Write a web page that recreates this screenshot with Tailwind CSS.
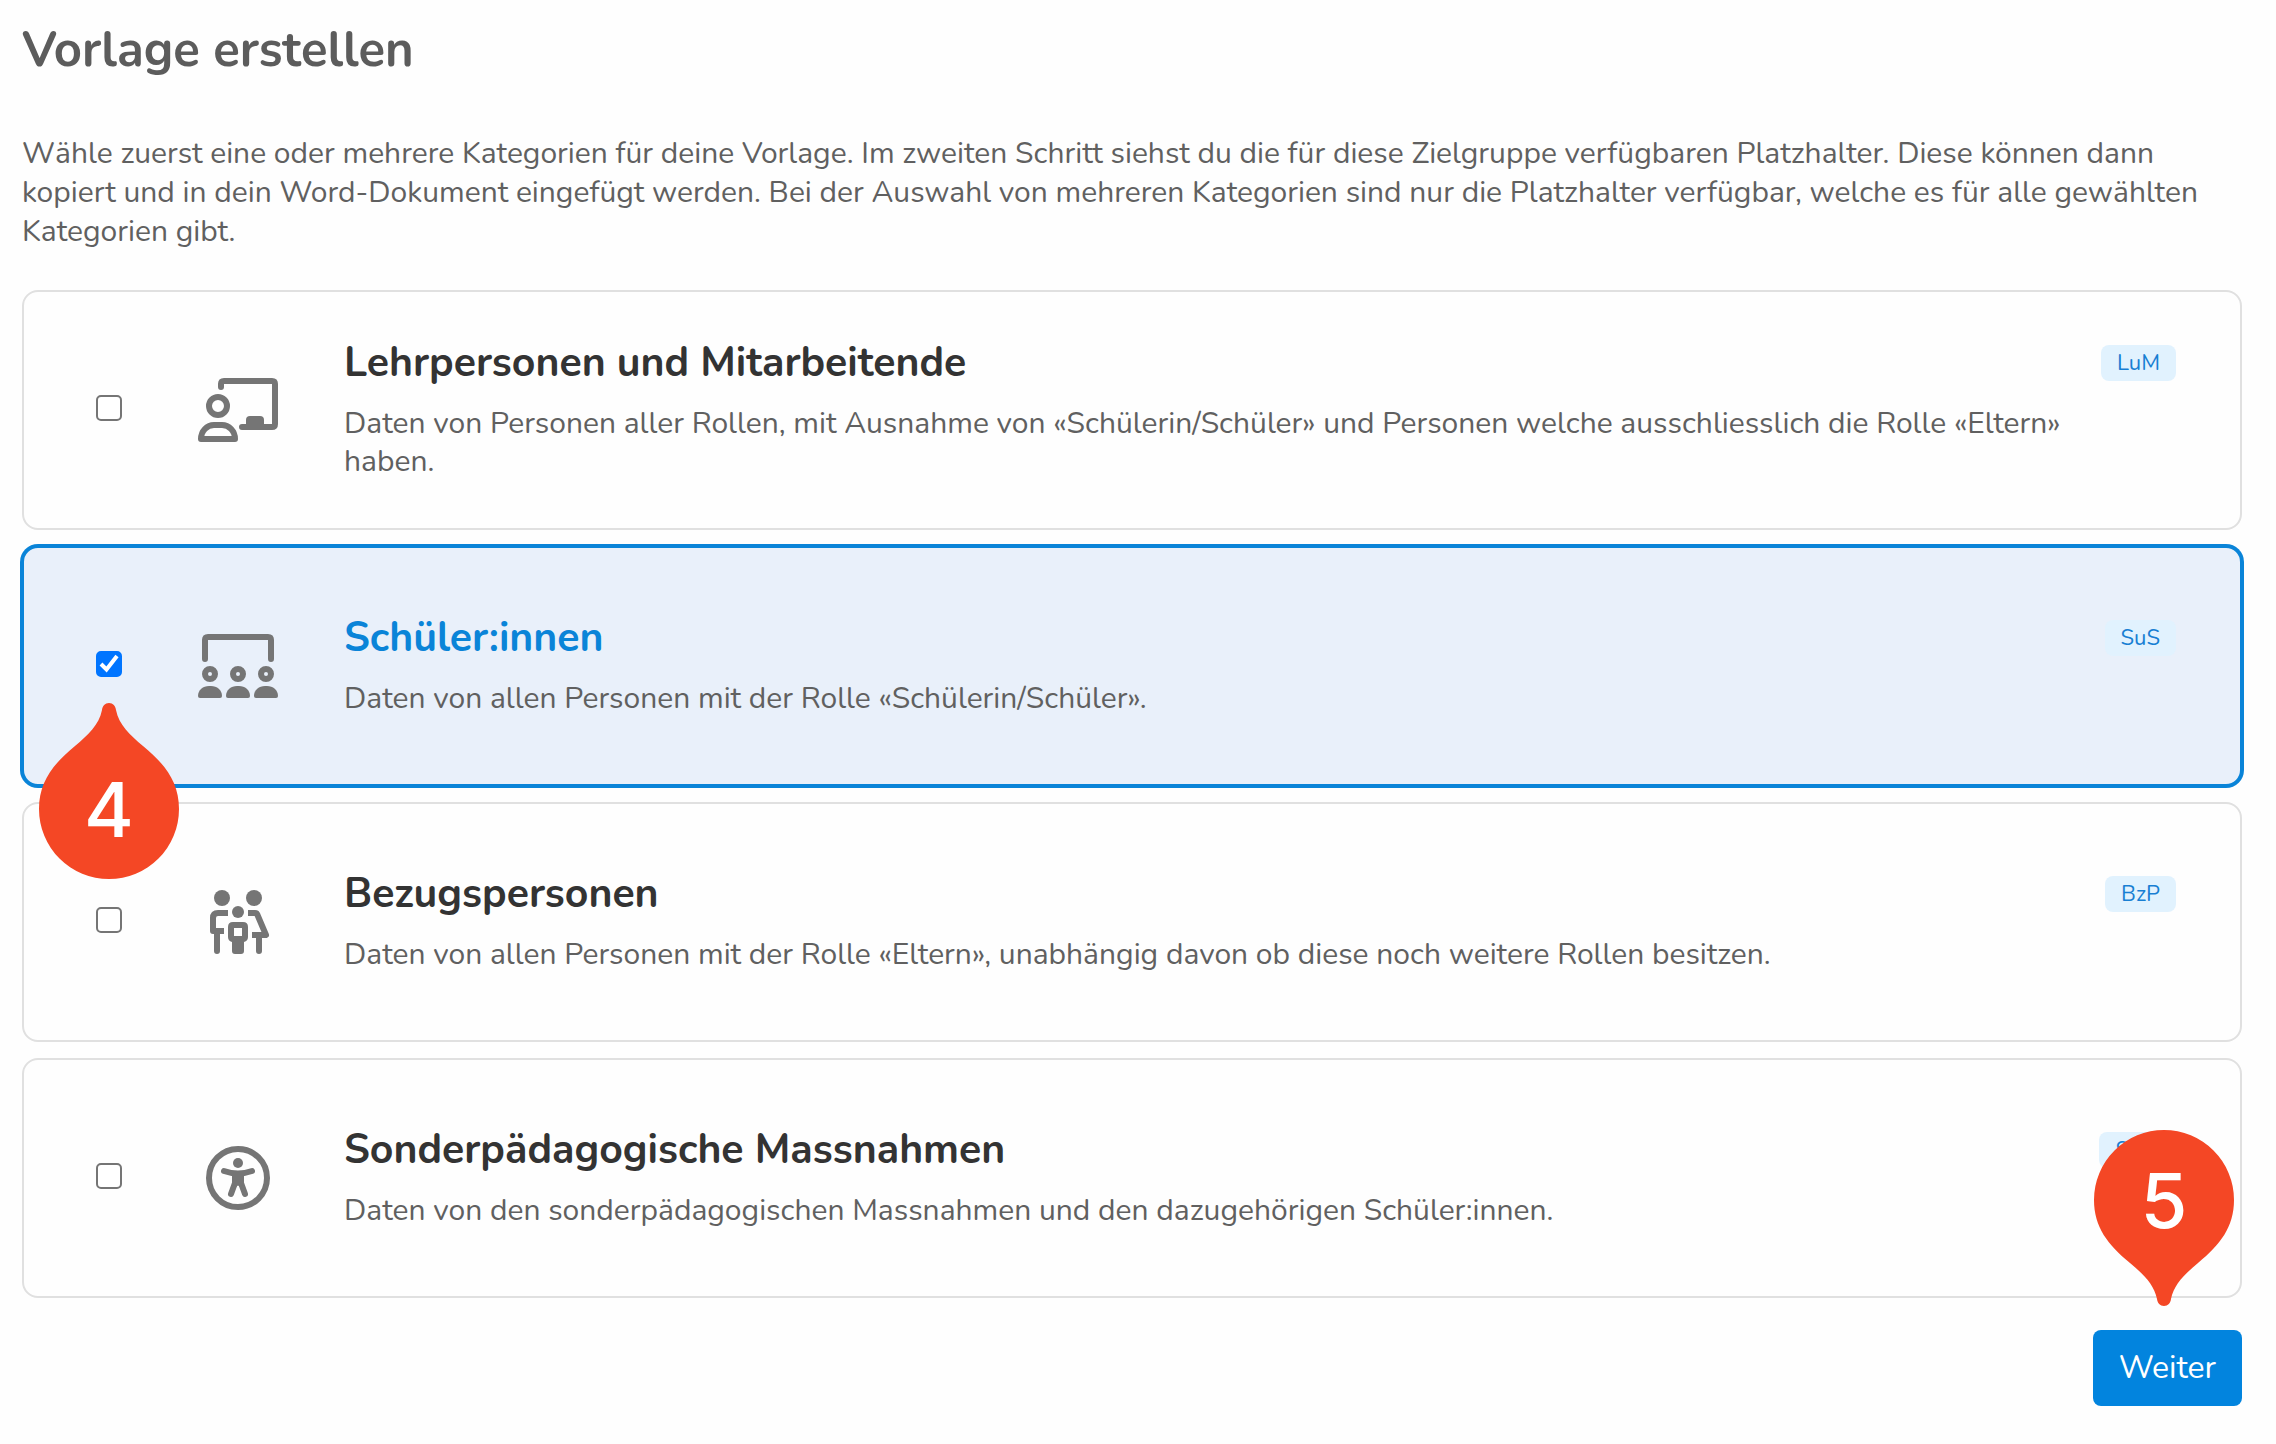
<!DOCTYPE html>
<html lang="de">
<head>
<meta charset="utf-8">
<title>Vorlage erstellen</title>
<script src="https://cdn.jsdelivr.net/npm/@tailwindcss/browser@4"></script>
</head>
<body class="bg-[#fefefe] font-['Nunito','Open_Sans',sans-serif] text-[30px] leading-[38px] text-[#606060]">
<main class="pt-5 pr-[34px] pb-9 pl-[22px]">
  <h1 class="text-[49px] leading-[60px] font-bold text-[#5c5c5c]">Vorlage erstellen</h1>
  <p class="mt-[54px] leading-[39px]">Wähle zuerst eine oder mehrere Kategorien für deine Vorlage. Im zweiten Schritt siehst du die für diese Zielgruppe verfügbaren Platzhalter. Diese können dann kopiert und in dein Word-Dokument eingefügt werden. Bei der Auswahl von mehreren Kategorien sind nur die Platzhalter verfügbar, welche es für alle gewählten Kategorien gibt.</p>

  <form>
    <div class="mt-[39px] flex flex-col gap-4">
      <label class="flex min-h-60 items-center rounded-2xl border-2 border-[#e0e0e0] pr-16 pl-18">
        <span class="relative mb-1 size-[26px] shrink-0">
          <input type="checkbox" class="peer block size-[26px] appearance-none rounded-[5px] border-2 border-[#757575] bg-white checked:border-[#0075ff] checked:bg-[#0075ff]">
          <svg class="pointer-events-none absolute inset-0 hidden peer-checked:block" viewBox="0 0 26 26" fill="none" stroke="#fff" stroke-width="4" aria-hidden="true"><path d="M5 13L10.500 18.500L21 5"/></svg>
        </span>
        <svg class="ml-19 h-16 w-20 shrink-0" viewBox="0 0 80 64" fill="none" stroke="#757575" stroke-width="6" stroke-linecap="round" aria-hidden="true">
          <path d="M23 9V6q0-3 3-3H74q3 0 3 3V46q0 3-3 3H44"/>
          <path d="M48 49V42q0-4 4-4H62q4 0 4 4V49z" fill="#757575" stroke="none"/>
          <circle cx="20" cy="28" r="9"/>
          <path d="M3 61C3 53 9 47 16 47h8c7 0 13 6 13 14z" stroke-linejoin="round"/>
        </svg>
        <span class="ml-[66px] flex-1">
          <span class="flex items-center justify-between">
            <span class="text-[41px] leading-[48px] font-bold text-[#333]">Lehrpersonen und Mitarbeitende</span>
            <span class="rounded-lg bg-[#e1f2fe] px-4 text-[22px] leading-9 text-[#187fd3]">LuM</span>
          </span>
          <span class="mt-[18px] block pr-16">Daten von Personen aller Rollen, mit Ausnahme von «Schülerin/Schüler» und Personen welche ausschliesslich die Rolle «Eltern» haben.</span>
        </span>
      </label>

      <label class="relative flex min-h-60 items-center rounded-2xl border-2 border-[#0a84d8] bg-[#e9f0fa] pr-16 pl-18 ring-2 ring-[#0a84d8]">
        <span class="relative mb-1 size-[26px] shrink-0">
          <input type="checkbox" checked class="peer block size-[26px] appearance-none rounded-[5px] border-2 border-[#757575] bg-white checked:border-[#0075ff] checked:bg-[#0075ff]">
          <svg class="pointer-events-none absolute inset-0 hidden peer-checked:block" viewBox="0 0 26 26" fill="none" stroke="#fff" stroke-width="4" aria-hidden="true"><path d="M5 13L10.500 18.500L21 5"/></svg>
          <span class="absolute top-full left-1/2 z-10 mt-[26px] flex h-44 w-[140px] -translate-x-1/2 items-end justify-center">
            <svg class="absolute inset-0" viewBox="0 0 140 176" fill="#f44725" aria-hidden="true"><path d="M70 0c4 0 6.500 3 7 7c3 15 14 25 27 36c22 18 36 36 36 63a70 70 0 0 1-140 0c0-27 14-45 36-63c13-11 24-21 27-36c.500-4 3-7 7-7z"/></svg>
            <span class="relative font-['Inter',sans-serif] text-[76px] leading-[140px] font-medium text-white">4</span>
          </span>
        </span>
        <svg class="ml-19 h-16 w-20 shrink-0" viewBox="0 0 80 64" fill="none" stroke="#757575" stroke-width="6" stroke-linecap="round" aria-hidden="true">
          <path d="M7 25V6q0-3 3-3H70q3 0 3 3V25"/>
          <circle cx="12" cy="40" r="5"/><circle cx="40" cy="40" r="5"/><circle cx="68" cy="40" r="5"/>
          <g fill="#757575" stroke="none">
            <path d="M0 62C0 56 5 52 11 52h2c6 0 11 4 11 10q0 2-2 2H2q-2 0-2-2z"/>
            <path d="M28 62c0-6 5-10 11-10h2c6 0 11 4 11 10q0 2-2 2H30q-2 0-2-2z"/>
            <path d="M56 62c0-6 5-10 11-10h2c6 0 11 4 11 10q0 2-2 2H58q-2 0-2-2z"/>
          </g>
        </svg>
        <span class="ml-[66px] flex-1">
          <span class="flex items-center justify-between">
            <span class="text-[41px] leading-[48px] font-bold text-[#0a84d8]">Schüler:innen</span>
            <span class="rounded-lg bg-[#e1f2fe] px-4 text-[22px] leading-9 text-[#187fd3]">SuS</span>
          </span>
          <span class="mt-[18px] block pr-16">Daten von allen Personen mit der Rolle «Schülerin/Schüler».</span>
        </span>
      </label>

      <label class="flex min-h-60 items-center rounded-2xl border-2 border-[#e0e0e0] pr-16 pl-18">
        <span class="relative mb-1 size-[26px] shrink-0">
          <input type="checkbox" class="peer block size-[26px] appearance-none rounded-[5px] border-2 border-[#757575] bg-white checked:border-[#0075ff] checked:bg-[#0075ff]">
          <svg class="pointer-events-none absolute inset-0 hidden peer-checked:block" viewBox="0 0 26 26" fill="none" stroke="#fff" stroke-width="4" aria-hidden="true"><path d="M5 13L10.500 18.500L21 5"/></svg>
        </span>
        <svg class="ml-19 h-16 w-20 shrink-0" viewBox="0 0 80 64" fill="none" stroke="#757575" stroke-width="6" aria-hidden="true">
          <path d="M30 23H20q-5 0-5 5V41H26M50 23H57q2 0 2.500 2L68 45H54" stroke-linejoin="round"/>
          <path d="M19 43V61M61 45V61" stroke-linecap="round"/>
          <g fill="#757575" stroke="none">
            <circle cx="24" cy="8" r="8"/><circle cx="56" cy="8" r="8"/>
            <circle cx="40" cy="22" r="6"/>
            <path fill-rule="evenodd" d="M35 32H45q5 0 5 5V47q0 4-4 5V61q0 3-3 3H37q-3 0-3-3V52q-4-1-4-5V37q0-5 5-5zM36 38V46H44V38z"/>
          </g>
        </svg>
        <span class="ml-[66px] flex-1">
          <span class="flex items-center justify-between">
            <span class="text-[41px] leading-[48px] font-bold text-[#333]">Bezugspersonen</span>
            <span class="rounded-lg bg-[#e1f2fe] px-4 text-[22px] leading-9 text-[#187fd3]">BzP</span>
          </span>
          <span class="mt-[18px] block pr-16">Daten von allen Personen mit der Rolle «Eltern», unabhängig davon ob diese noch weitere Rollen besitzen.</span>
        </span>
      </label>

      <label class="flex min-h-60 items-center rounded-2xl border-2 border-[#e0e0e0] pr-16 pl-18">
        <span class="relative mb-1 size-[26px] shrink-0">
          <input type="checkbox" class="peer block size-[26px] appearance-none rounded-[5px] border-2 border-[#757575] bg-white checked:border-[#0075ff] checked:bg-[#0075ff]">
          <svg class="pointer-events-none absolute inset-0 hidden peer-checked:block" viewBox="0 0 26 26" fill="none" stroke="#fff" stroke-width="4" aria-hidden="true"><path d="M5 13L10.500 18.500L21 5"/></svg>
        </span>
        <svg class="ml-19 h-16 w-20 shrink-0" viewBox="0 0 80 64" fill="none" stroke="#757575" stroke-width="6" stroke-linecap="round" aria-hidden="true">
          <circle cx="40" cy="32" r="29"/>
          <path d="M26 25Q40 30 54 25M37 37L33 48M43 37L47 48"/>
          <path d="M34 27H46V37L43 41H42Q40 38 38 41H37L34 37z" fill="#757575" stroke="none"/>
          <circle cx="40" cy="17" r="5" fill="#757575" stroke="none"/>
        </svg>
        <span class="ml-[66px] flex-1">
          <span class="flex items-center justify-between">
            <span class="text-[41px] leading-[48px] font-bold text-[#333]">Sonderpädagogische Massnahmen</span>
            <span class="rounded-lg bg-[#e1f2fe] px-4 text-[22px] leading-9 text-[#187fd3]">SoM</span>
          </span>
          <span class="mt-[18px] block pr-16">Daten von den sonderpädagogischen Massnahmen und den dazugehörigen Schüler:innen.</span>
        </span>
      </label>
    </div>

    <div class="relative mt-8 flex justify-end">
      <button type="button" class="h-19 rounded-lg bg-[#0284de] px-[26px] text-[32px] text-white">Weiter</button>
      <span class="absolute right-2 bottom-full mb-6 flex h-44 w-[140px] items-start justify-center">
        <svg class="absolute inset-0 rotate-180" viewBox="0 0 140 176" fill="#f44725" aria-hidden="true"><path d="M70 0c4 0 6.500 3 7 7c3 15 14 25 27 36c22 18 36 36 36 63a70 70 0 0 1-140 0c0-27 14-45 36-63c13-11 24-21 27-36c.500-4 3-7 7-7z"/></svg>
        <span class="relative font-['Inter',sans-serif] text-[76px] leading-[140px] font-medium text-white">5</span>
      </span>
    </div>
  </form>
</main>
</body>
</html>
